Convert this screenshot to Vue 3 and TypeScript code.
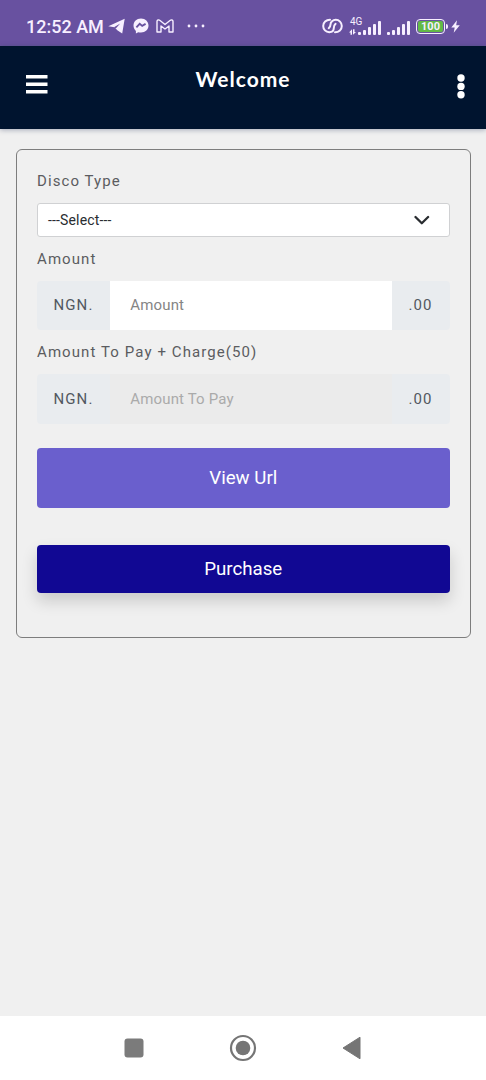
<script setup lang="ts">
import { ref } from 'vue'

const charge = 50
const disco = ref('---Select---')
const bars = [3, 5, 8, 11, 14]
</script>

<template>
  <div class="screen">
    <div class="status">
      <span class="time">12:52 AM</span>
      <svg class="telegram" width="17" height="16" viewBox="0 0 17 16">
        <path d="M.3 8.300 16.700.7 14.200 15.600 9.300 12.200 6.500 9.300Z" fill="#f7efff" />
        <path d="m6 9.300 6.200-3.700-4.400 4.900Z" fill="#6851a0" />
      </svg>
      <svg class="messenger" width="16" height="16" viewBox="0 0 16 16">
        <path d="M8 .5C3.600.5.5 3.600.5 7.600c0 2.200.9 4 2.400 5.300v2.500l2.300-1.200c.9.3 1.800.4 2.800.4 4.400 0 7.500-3.100 7.500-7S12.400.5 8 .5Z" fill="#f7efff" />
        <path d="m3.400 9.400 3.300-3.600 2.500 2.100 3.400-2" fill="none" stroke="#6851a0" stroke-width="1.800" />
      </svg>
      <svg class="gmail" width="18" height="14" viewBox="0 0 18 14">
        <path d="M1 13V2.500C1 .8 2.800.5 4 1.500L9 5.500l5-4c1.200-1 3-.7 3 1V13h-4V7L9 10 5 7v6Z" fill="none" stroke="#f7efff" stroke-width="1.400" stroke-linejoin="round" />
      </svg>
      <svg class="dots" width="18" height="4" viewBox="0 0 18 4" fill="#f7efff">
        <circle cx="2" cy="2" r="1.400" /><circle cx="9" cy="2" r="1.400" /><circle cx="16" cy="2" r="1.400" />
      </svg>
      <svg class="link" width="21" height="16" viewBox="0 0 21 16">
        <g fill="none" stroke="#f7efff" stroke-width="2" stroke-linecap="round">
          <path d="M8 1.700C4 1.700 1.200 4.500 1.200 8s2.700 6.200 6 6.200c3 0 4.600-1.700 4.600-4.200 0-1.500.4-3 1.800-4.200" />
          <path d="M13 14.300c4 0 6.800-2.800 6.800-6.300s-2.700-6.200-6-6.200c-3 0-5.300 2.200-5.300 4.700 0 1.500-.4 2.500-1.800 3.700" />
        </g>
      </svg>
      <div class="mobile">
        <div class="network">
          <span>4G</span>
          <svg width="8" height="6" viewBox="0 0 8 6" fill="#f7efff">
            <path d="M0 3.500 3 .3V5.800H1.500V3.500ZM4 .3h1.500V3H7L4 5.800Z" />
          </svg>
        </div>
        <div class="bars"><i v-for="h in bars" :key="h" :style="{ height: h + 'px' }"></i></div>
      </div>
      <div class="bars second"><i v-for="h in bars" :key="h" :style="{ height: h + 'px' }"></i></div>
      <div class="battery"><span>100</span></div>
      <svg class="bolt" width="9" height="13" viewBox="0 0 9 13"><path d="M6 .3.300 7.400h3.400L2.700 12.700 8.800 5.300H5.200Z" fill="#f7efff" /></svg>
    </div>

    <header class="header">
      <svg class="menu" width="22" height="19" viewBox="0 0 22 19" fill="#fff">
        <path d="M0 0h21.500v3.400H0ZM0 7.500h21.500v3.400H0ZM0 15h21.500v3.400H0Z" />
      </svg>
      <h1>Welcome</h1>
      <svg class="more" width="8" height="25" viewBox="0 0 8 25" fill="#fff">
        <circle cx="4" cy="4" r="3.700" /><circle cx="4" cy="12.400" r="3.700" /><circle cx="4" cy="20.700" r="3.700" />
      </svg>
    </header>

    <main>
      <form class="card" @submit.prevent>
        <label class="label">Disco Type</label>
        <div class="select">
          <span>{{ disco }}</span>
          <svg width="16" height="10" viewBox="0 0 16 10"><path d="m1.500 2 6.300 6.200 6.300-6.200" fill="none" stroke="#292c30" stroke-width="2.300" stroke-linecap="round" stroke-linejoin="round" /></svg>
        </div>
        <label class="label amount">Amount</label>
        <div class="group">
          <span class="addon">NGN.</span>
          <input type="text" placeholder="Amount" />
          <span class="addon end">.00</span>
        </div>
        <label class="label total">Amount To Pay + Charge({{ charge }})</label>
        <div class="group muted">
          <span class="addon">NGN.</span>
          <input type="text" placeholder="Amount To Pay" disabled />
          <span class="addon end">.00</span>
        </div>
        <button type="button" class="view">View Url</button>
        <button type="button" class="purchase">Purchase</button>
      </form>
    </main>

    <nav class="nav">
      <svg width="20" height="20" viewBox="0 0 20 20"><rect x=".5" y=".5" width="19" height="19" rx="3" fill="#7b7b7b" /></svg>
      <svg width="28" height="28" viewBox="0 0 28 28"><circle cx="14" cy="14" r="12" fill="none" stroke="#757575" stroke-width="2.200" /><circle cx="14" cy="14" r="7.300" fill="#757575" /></svg>
      <svg width="19" height="24" viewBox="0 0 19 24"><path d="M1 12 18 1.200v21.600Z" fill="#757575" stroke="#757575" stroke-linejoin="round" /></svg>
    </nav>
  </div>
</template>

<style>
body { margin: 0; background: #f0f0f0; }
</style>

<style scoped>
* { box-sizing: border-box; }
svg { display: block; flex: none; }
.screen { width: 486px; height: 1080px; display: flex; flex-direction: column; background: #f0f0f0; font-family: Roboto, "Liberation Sans", sans-serif; overflow: hidden; }
.status { height: 46px; flex: none; display: flex; align-items: center; padding: 7px 26px 0; background: #6851a0; color: #f7efff; border-bottom: 1px solid #66559c; }
.time { width: 82px; flex: none; font-size: 18px; font-weight: 500; letter-spacing: 0; white-space: nowrap; }
.messenger { margin-left: 8px; }
.gmail { margin-left: 7px; }
.dots { margin-left: 13px; }
.link { margin-left: 117px; }
.mobile { display: flex; align-items: flex-end; margin-left: 7px; height: 18px; width: 31px; }
.network { width: 8px; flex: none; display: flex; flex-direction: column; justify-content: space-between; height: 18px; }
.network span { font-size: 10px; line-height: 10px; white-space: nowrap; }
.network svg { margin-left: -1px; }
.bars { display: flex; align-items: flex-end; gap: 2px; flex: none; }
.bars i { width: 3px; background: #f7efff; border-radius: 1px; }
.second { margin-left: 6px; height: 18px; }
.battery { position: relative; width: 29px; height: 15px; margin-left: 6px; flex: none; border: 1px solid #f7efff; border-radius: 4px; padding: 1px; }
.battery::after { content: ""; position: absolute; right: -4px; top: 4px; width: 2px; height: 5px; border-radius: 0 2px 2px 0; background: #f7efff; }
.battery span { display: block; height: 100%; border-radius: 2px; background: #62b947; font-size: 11px; font-weight: 700; line-height: 11px; text-align: center; }
.bolt { margin-left: 6px; }
.header { position: relative; z-index: 1; height: 83px; flex: none; display: flex; align-items: flex-start; padding: 0 21px 0 26px; background: #00142f; box-shadow: 0 1px 5px rgba(30, 40, 80, .35); }
.menu { margin-top: 29px; }
h1 { flex: 1; margin: 19px 0 0; color: #fff; font: 700 21px/28px Lato, sans-serif; letter-spacing: 1px; text-align: center; padding-right: 19px; }
.more { margin-top: 28px; }
main { flex: 1; padding: 20px 15px 0 16px; }
.card { height: 489px; display: flex; flex-direction: column; padding: 20px 20.500px 20px 20px; border: 1px solid #7d7d7d; border-radius: 6px; }
.label { height: 22px; line-height: 22px; font-size: 15px; letter-spacing: 1.090px; color: #5b5c60; white-space: nowrap; }
.select { height: 34px; flex: none; display: flex; align-items: center; justify-content: space-between; margin-top: 11px; padding: 0 19px 1px 10px; border: 1px solid #d0d1d3; border-radius: 3px; background: #fff; color: #292c30; font-size: 14px; letter-spacing: .15px; }
.amount { margin-top: 11px; }
.group { height: 49px; flex: none; display: flex; margin-top: 11px; border-radius: 4px; overflow: hidden; }
.addon { width: 73px; flex: none; display: flex; align-items: center; padding: 0 0 1px 16.500px; background: #e9ecef; color: #525860; font-size: 15px; letter-spacing: 1.100px; }
.end { width: 57.500px; padding-left: 16.500px; }
input { flex: 1; min-width: 0; border: 0; padding: 0 20px 1px 20.300px; background: #fff; font: 15px Roboto, sans-serif; letter-spacing: .15px; }
input::placeholder { color: #858585; opacity: 1; }
.total { margin-top: 11px; }
.muted { height: 50px; }
.muted input { background: #ebebeb; }
.muted input::placeholder { color: #aaa; }
button { width: 100%; flex: none; border: 0; border-radius: 4px; color: #fff; font: 18.700px Roboto, sans-serif; padding: 1px 0 0; }
.view { height: 60px; margin-top: 23.500px; background: #6a5fcd; }
.purchase { height: 48.500px; margin-top: 37px; background: #110893; box-shadow: 0 8px 16px rgba(0, 0, 0, .16); }
.nav { height: 64px; flex: none; display: flex; align-items: center; padding-left: 124px; background: #fff; }
.nav svg + svg { margin-left: 85px; }
</style>
